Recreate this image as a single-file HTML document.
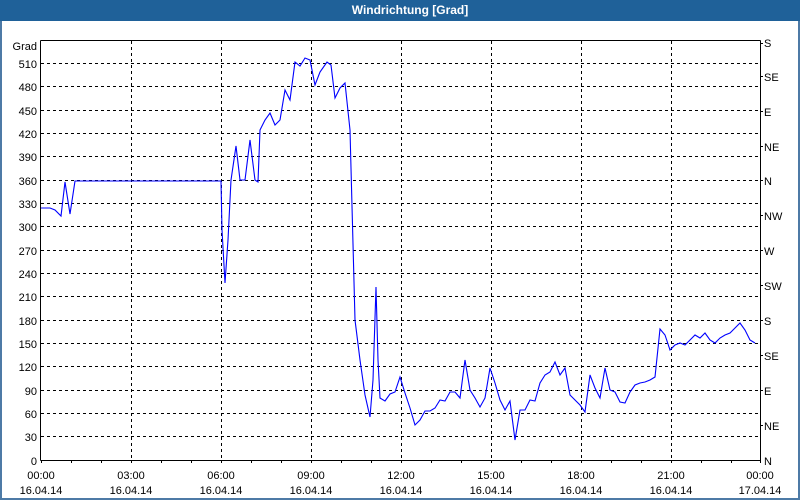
<!DOCTYPE html>
<html><head><meta charset="utf-8"><style>
html,body{margin:0;padding:0;width:800px;height:500px;overflow:hidden;background:#fff;font-family:"Liberation Sans",sans-serif;}
#t{position:absolute;left:0;top:0;width:780px;padding-left:20px;height:21px;background:#1f6199;color:#fff;font-weight:bold;font-size:12px;text-align:center;line-height:21px;}
#f{position:absolute;left:0;top:21px;width:796px;height:477px;border:2px solid #4d7aa6;border-top:none;}
svg{position:absolute;left:0;top:0}
text{font-family:"Liberation Sans",sans-serif;font-size:11px;fill:#000}
</style></head><body>
<div id="t">Windrichtung [Grad]</div>
<div id="f"></div>
<svg width="800" height="500" shape-rendering="crispEdges">
<g stroke="#000" stroke-dasharray="3,3" stroke-width="1">
<line x1="41" y1="63.5" x2="760" y2="63.5"/><line x1="41" y1="86.5" x2="760" y2="86.5"/><line x1="41" y1="110.5" x2="760" y2="110.5"/><line x1="41" y1="133.5" x2="760" y2="133.5"/><line x1="41" y1="156.5" x2="760" y2="156.5"/><line x1="41" y1="180.5" x2="760" y2="180.5"/><line x1="41" y1="203.5" x2="760" y2="203.5"/><line x1="41" y1="226.5" x2="760" y2="226.5"/><line x1="41" y1="250.5" x2="760" y2="250.5"/><line x1="41" y1="273.5" x2="760" y2="273.5"/><line x1="41" y1="296.5" x2="760" y2="296.5"/><line x1="41" y1="320.5" x2="760" y2="320.5"/><line x1="41" y1="343.5" x2="760" y2="343.5"/><line x1="41" y1="366.5" x2="760" y2="366.5"/><line x1="41" y1="390.5" x2="760" y2="390.5"/><line x1="41" y1="413.5" x2="760" y2="413.5"/><line x1="41" y1="436.5" x2="760" y2="436.5"/>
<line x1="131.5" y1="41" x2="131.5" y2="460"/><line x1="221.5" y1="41" x2="221.5" y2="460"/><line x1="311.5" y1="41" x2="311.5" y2="460"/><line x1="401.5" y1="41" x2="401.5" y2="460"/><line x1="491.5" y1="41" x2="491.5" y2="460"/><line x1="581.5" y1="41" x2="581.5" y2="460"/><line x1="671.5" y1="41" x2="671.5" y2="460"/>
</g>
<g stroke="#000" stroke-width="1">
<line x1="40.5" y1="40.5" x2="760.5" y2="40.5"/><line x1="40.5" y1="40.5" x2="40.5" y2="460.5"/><line x1="760.5" y1="40.5" x2="760.5" y2="460.5"/><line x1="40.5" y1="460.5" x2="760.5" y2="460.5"/>
<path d="M71.5 460v3M101.5 460v3M131.5 460v3M161.5 460v3M191.5 460v3M221.5 460v3M251.5 460v3M281.5 460v3M311.5 460v3M341.5 460v3M371.5 460v3M401.5 460v3M431.5 460v3M461.5 460v3M491.5 460v3M521.5 460v3M551.5 460v3M581.5 460v3M611.5 460v3M641.5 460v3M671.5 460v3M701.5 460v3M731.5 460v3M760.5 460v3M41.5 460v3"/>
<path d="M760 43.5h3M760 76.5h3M760 111.5h3M760 146.5h3M760 180.5h3M760 215.5h3M760 250.5h3M760 285.5h3M760 320.5h3M760 355.5h3M760 390.5h3M760 425.5h3"/>
</g>
<polyline shape-rendering="auto" fill="none" stroke="#0000ff" stroke-width="1.1" points="41,208 50,208 55,210 61,216 65,182 70,214 75,181 221,181 222,230 225,283 228,240 231,180 236,146 240,180 245,180 250,140 255,180 258,182 260,130 265,120 270,113 275,125 280,120 285,90 290,100 295,62 300,66 305,58 310,60 315,85 320,72 327,62 331,65 335,98 340,88 345,83 350,130 355,320 360,360 365,395 370,417 373,380 376,287 378,360 380,398 385,401 390,394 395,392 400,377 405,393 410,408 415,425 420,420 425,411 430,411 435,408 440,400 445,401 450,392 455,392 460,398 465,360 470,390 475,398 480,407 485,398 490,368 495,383 500,400 505,410 510,401 515,440 520,410 525,410 530,400 535,401 540,383 545,375 550,372 555,362 560,375 565,368 570,395 575,400 580,405 585,412 590,375 595,388 600,398 605,368 610,390 615,392 620,402 625,403 630,392 635,385 640,383 645,382 650,380 655,377 660,329 665,335 670,350 675,345 680,343 685,345 690,340 695,335 700,338 705,333 710,340 715,343 720,338 725,335 730,333 735,328 740,323 745,330 750,340 755,343"/>
<g text-anchor="end">
<text x="37" y="50">Grad</text>
<text x="37" y="68">510</text><text x="37" y="91">480</text><text x="37" y="115">450</text><text x="37" y="138">420</text><text x="37" y="161">390</text><text x="37" y="185">360</text><text x="37" y="208">330</text><text x="37" y="231">300</text><text x="37" y="255">270</text><text x="37" y="278">240</text><text x="37" y="301">210</text><text x="37" y="325">180</text><text x="37" y="348">150</text><text x="37" y="371">120</text><text x="37" y="395">90</text><text x="37" y="418">60</text><text x="37" y="441">30</text><text x="37" y="465">0</text>
</g>
<g>
<text x="764" y="47">S</text><text x="764" y="81">SE</text><text x="764" y="116">E</text><text x="764" y="151">NE</text><text x="764" y="185">N</text><text x="764" y="220">NW</text><text x="764" y="255">W</text><text x="764" y="290">SW</text><text x="764" y="325">S</text><text x="764" y="360">SE</text><text x="764" y="395">E</text><text x="764" y="430">NE</text><text x="764" y="465">N</text>
</g>
<g text-anchor="middle">
<text x="41" y="479">00:00</text><text x="41" y="494">16.04.14</text>
<text x="131" y="479">03:00</text><text x="131" y="494">16.04.14</text>
<text x="221" y="479">06:00</text><text x="221" y="494">16.04.14</text>
<text x="311" y="479">09:00</text><text x="311" y="494">16.04.14</text>
<text x="401" y="479">12:00</text><text x="401" y="494">16.04.14</text>
<text x="491" y="479">15:00</text><text x="491" y="494">16.04.14</text>
<text x="581" y="479">18:00</text><text x="581" y="494">16.04.14</text>
<text x="671" y="479">21:00</text><text x="671" y="494">16.04.14</text>
<text x="760" y="479">00:00</text><text x="760" y="494">17.04.14</text>
</g>
</svg>
</body></html>
